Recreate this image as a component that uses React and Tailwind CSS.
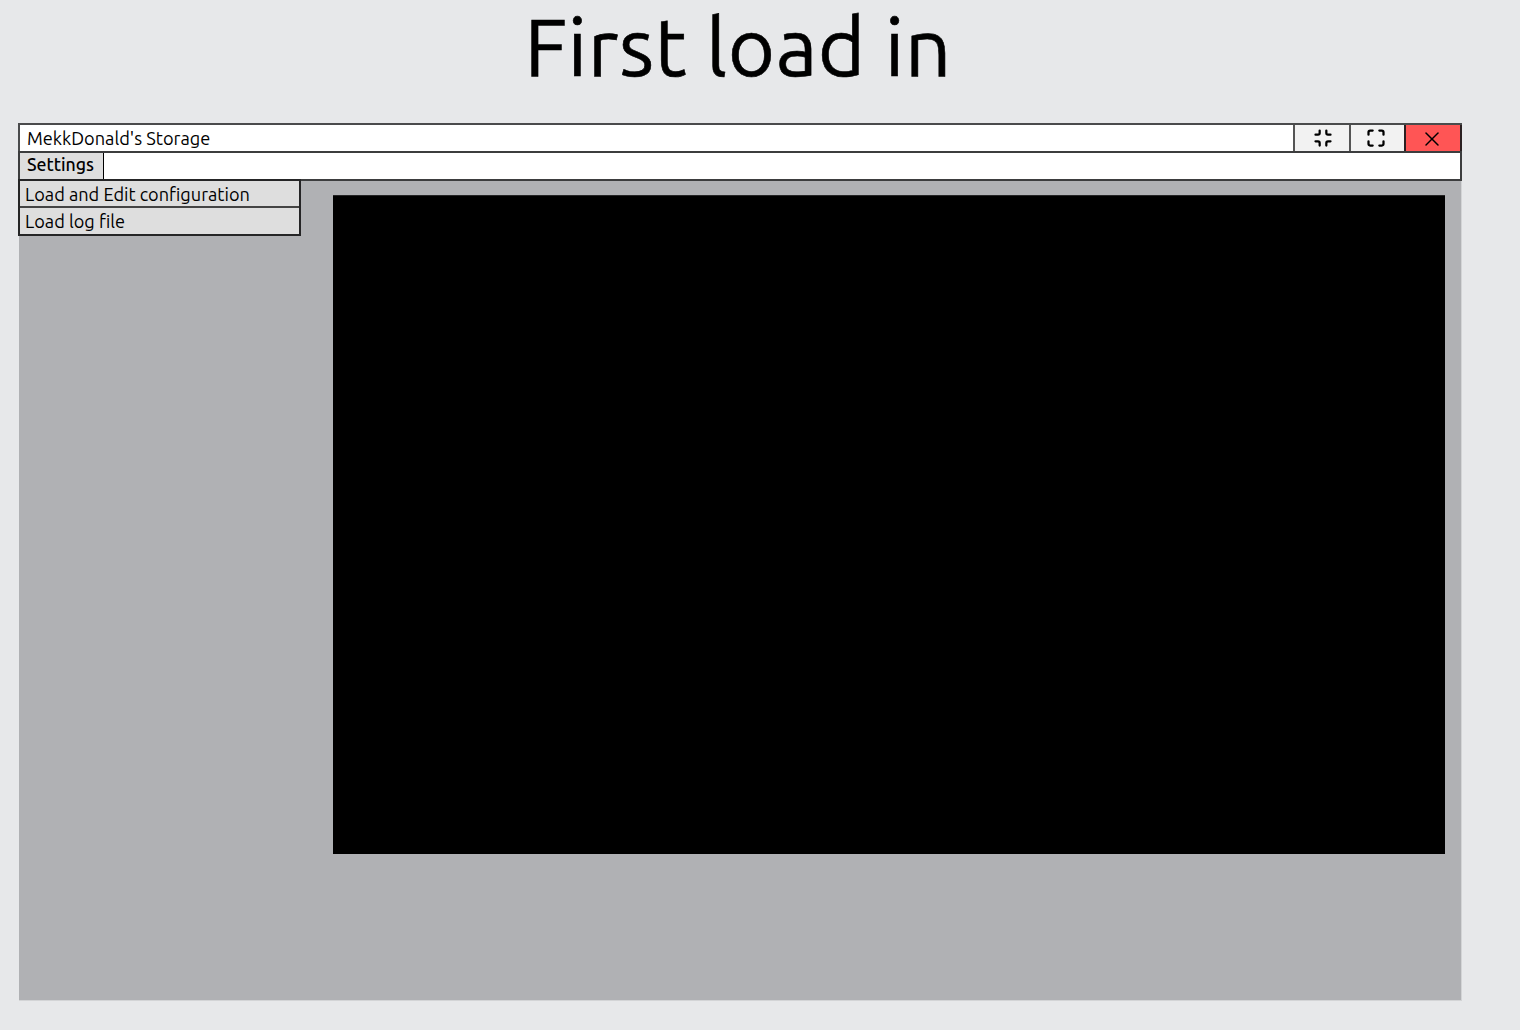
import { Maximize, Minimize, X } from "lucide-react";

export default function App() {
  return (
    <div className="h-[1030px] w-[1520px] overflow-hidden bg-[#e7e8ea] pl-[18px] font-['Ubuntu','Noto_Sans',sans-serif] text-black">
      <h1 className="h-[123px] pl-[506.5px] text-[81px] leading-[92px] tracking-[0.5px] whitespace-nowrap [-webkit-text-stroke:0.6px_black]">
        First load in
      </h1>

      <main className="w-[1444px]">
        <header className="flex h-7 border-x-2 border-t-2 border-[#4a4b4c] bg-white">
          <div className="flex-1 pl-[7px] text-[18.2px] leading-[27px]">MekkDonald's Storage</div>
          <button className="flex w-14 items-center justify-center border-l-2 border-[#555] bg-[#f2f2f2] pl-[2px]">
            <Minimize size={20} strokeWidth={2.7} />
          </button>
          <button className="flex w-[55px] items-center justify-center border-l-2 border-[#555] bg-[#f2f2f2] pr-[3px]">
            <Maximize size={20} strokeWidth={2.7} />
          </button>
          <button className="-mr-[2px] flex w-[58px] items-center justify-center border-x-2 border-[#2b2022] bg-[#ff5555] pt-px pr-[2px]">
            <X size={24} strokeWidth={1.5} />
          </button>
        </header>

        <nav className="relative flex h-[30px] border-2 border-[#3c3d3e] bg-white">
          <button className="flex w-[84px] border-r border-black bg-[#dedede] pl-[7px] text-[17.7px] leading-[23px] font-medium">
            Settings
          </button>
          <ul className="absolute top-[26px] -left-[2px] w-[283px] border-2 border-[#252526] bg-[#dedede] text-[18.15px] whitespace-nowrap">
            <li className="h-[27px] border-b-2 border-[#444] pl-[5px] leading-[26px]">Load and Edit configuration</li>
            <li className="h-[26px] pl-[5px] leading-[26px]">Load log file</li>
          </ul>
        </nav>

        <section className="ml-px h-[820px] w-[1443px] border-r border-b border-[#d3d4d6] bg-[#b0b1b4] bg-clip-padding pt-[14px] pl-[314px]">
          <div className="h-[659px] w-[1112px] border-t border-[#242425] bg-black" />
        </section>
      </main>
    </div>
  );
}
